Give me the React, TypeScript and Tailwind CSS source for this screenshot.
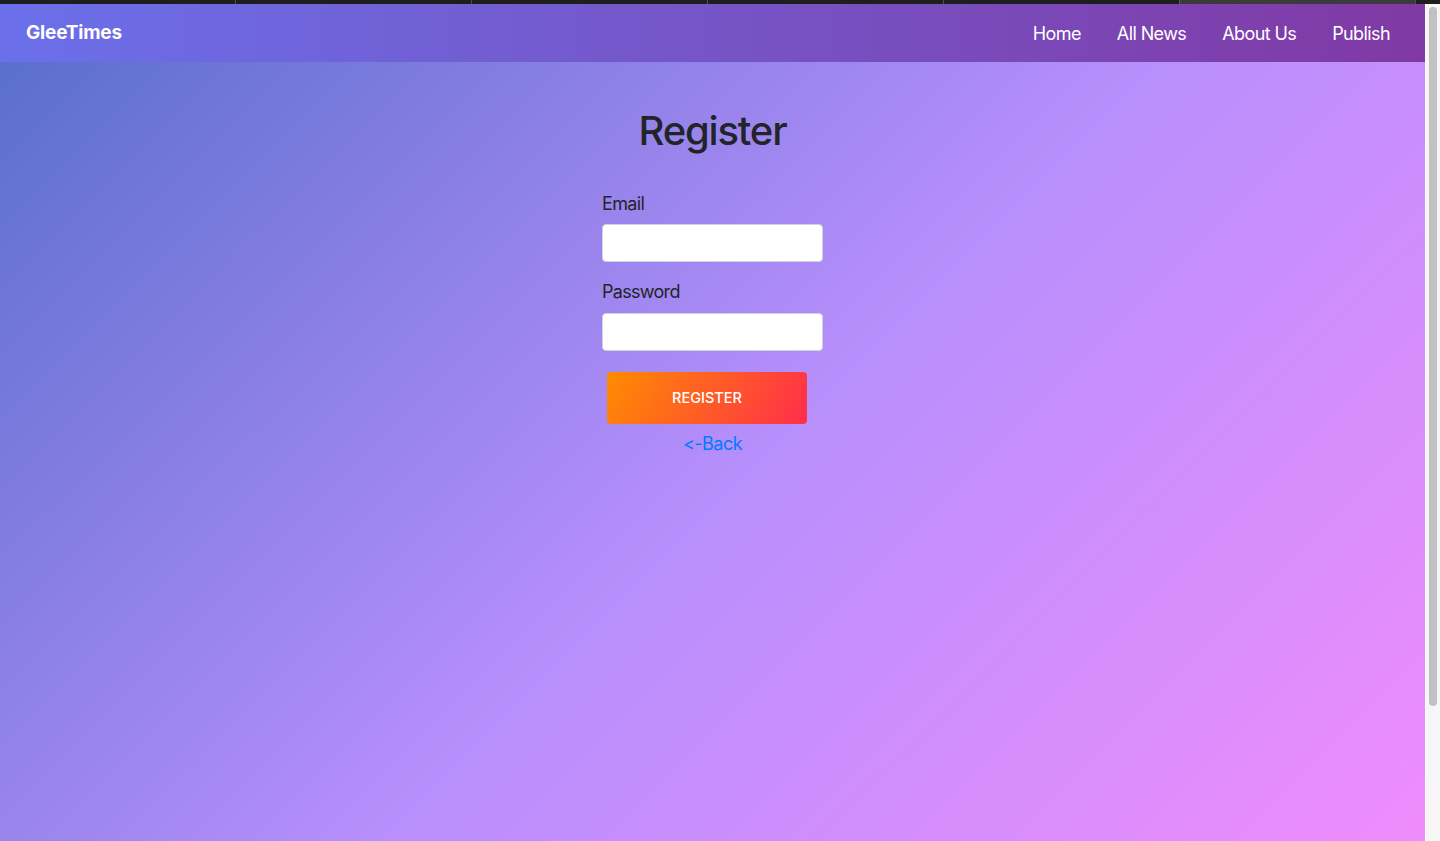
import React from "react";

const font = {
  fontFamily: "Inter, 'Noto Sans', 'Liberation Sans', sans-serif",
  fontFeatureSettings: "'calt' 0, 'liga' 0",
};

function TopStrip() {
  const segs = [235, 236, 236, 236, 236, 236];
  return (
    <div className="flex h-[4px] w-full bg-[#1e1e1e]">
      {segs.map((w, i) => (
        <div
          key={i}
          className={
            i === 5
              ? "h-full border-l border-[#5a5a5a] bg-[#3b3b3b]"
              : i === 0
              ? "h-full bg-[#1e1e1e]"
              : "h-full border-l border-[#4e4e4e] bg-[#1e1e1e]"
          }
          style={{ width: w }}
        />
      ))}
      <div className="h-full flex-1 border-l border-[#4e4e4e] bg-[#1e1e1e]" />
    </div>
  );
}

function Navbar() {
  const links = ["Home", "All News", "About Us", "Publish"];
  return (
    <nav className="flex h-[58px] shrink-0 items-center justify-between bg-[linear-gradient(90deg,#6b70ea_0%,#8039a4_100%)] pl-[26px] pr-[17px]">
      <a className="text-[19px] font-bold tracking-[-0.2px] text-white">GleeTimes</a>
      <ul className="flex items-center">
        {links.map((l) => (
          <li key={l}>
            <a className="block px-[18px] text-[18px] tracking-[-0.6px] text-white">{l}</a>
          </li>
        ))}
      </ul>
    </nav>
  );
}

function Scrollbar() {
  return (
    <div className="flex w-[15px] shrink-0 flex-col border-l border-[#fdfdfd] bg-[#f6f6f6] pt-[3px]">
      <div className="ml-[3px] h-[699px] w-[8px] rounded-full bg-[#c1c1c1]" />
    </div>
  );
}

export default function App() {
  return (
    <div className="flex h-[841px] w-[1440px] flex-col overflow-hidden" style={font}>
      <TopStrip />
      <div className="flex flex-1">
        <div className="flex w-[1425px] flex-col">
          <Navbar />
          <main className="flex flex-1 flex-col items-center bg-[linear-gradient(135deg,#5a6fcd_0%,#b88ffc_52.6%,#f08cfc_100%)] pt-[45px]">
            <h1 className="mb-[35px] text-[40px] font-medium leading-[1.2] tracking-[-1.2px] text-[#212529]">Register</h1>
            <form className="flex w-[221px] flex-col">
              <label className="mb-[7px] text-[18px] leading-[27px] tracking-[-0.65px] text-[#212529]">Email</label>
              <input
                type="email"
                className="mb-[16px] h-[38px] w-full rounded-[4px] border border-[#ced4da] bg-white px-3"
              />
              <label className="mb-[8px] text-[18px] leading-[27px] tracking-[-0.7px] text-[#212529]">Password</label>
              <input
                type="password"
                className="h-[38px] w-full rounded-[4px] border border-[#ced4da] bg-white px-3"
              />
              <button
                type="button"
                className="ml-[5px] mt-[21px] h-[52px] w-[200px] rounded-[4px] bg-[linear-gradient(120deg,#ff8c00_0%,#ff2d4b_100%)] text-[14.5px] font-medium text-white"
              >
                REGISTER
              </button>
              <a className="mt-[6px] self-center text-[18px] leading-[27px] tracking-[-0.5px] text-[#007bff]">&lt;-Back</a>
            </form>
          </main>
        </div>
        <Scrollbar />
      </div>
    </div>
  );
}
